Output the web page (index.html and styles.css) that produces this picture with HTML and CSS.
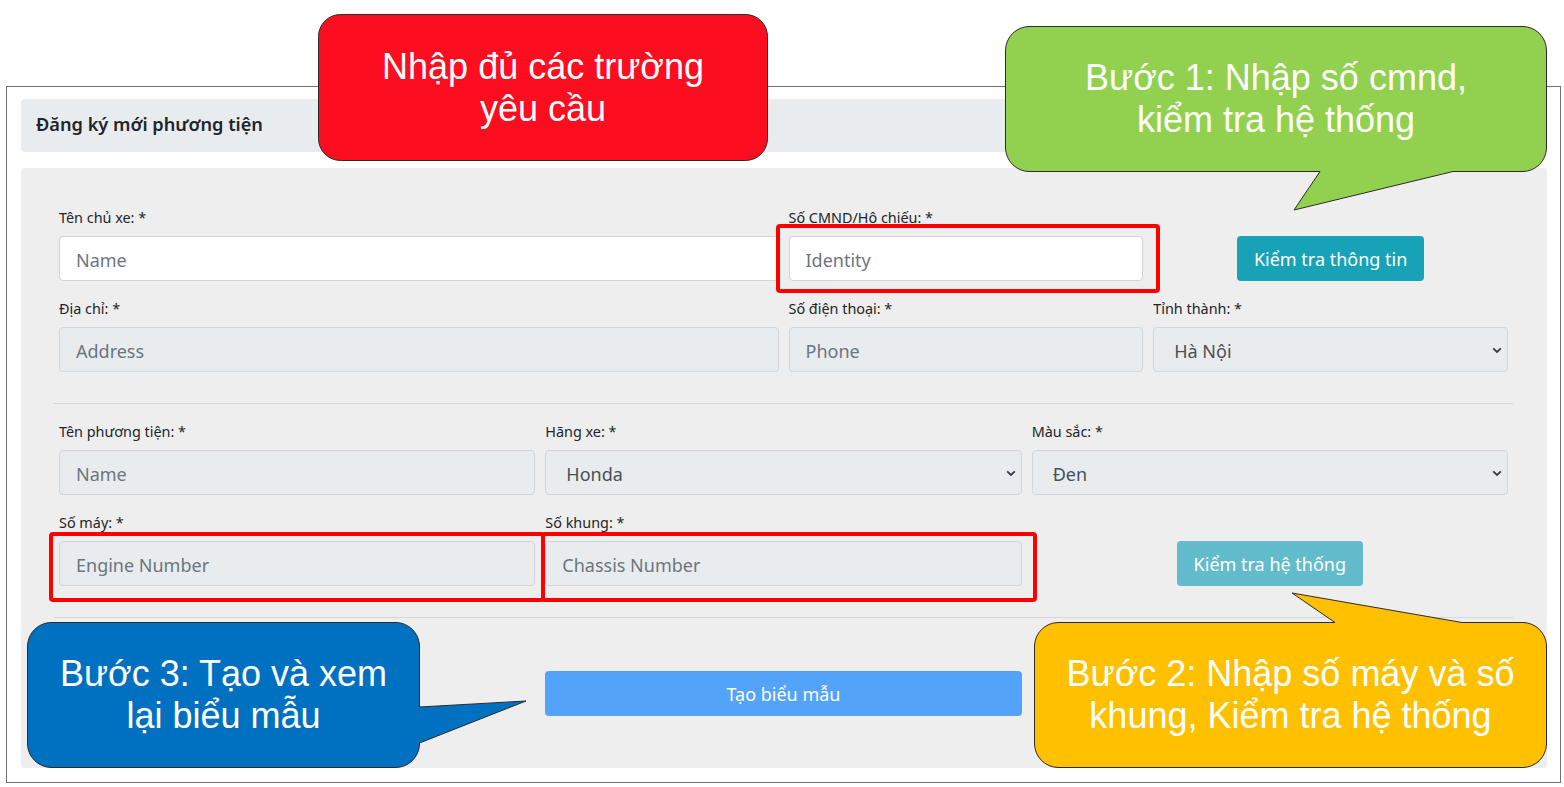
FILE: index.html
```html
<!DOCTYPE html>
<html lang="vi">
<head>
<meta charset="utf-8">
<title>Đăng ký mới phương tiện</title>
<link rel="stylesheet" href="styles.css">
</head>
<body>
<div class="page">
  <div class="frame">
    <div class="header">Đăng ký mới phương tiện</div>
    <div class="card">
      <div class="row">
        <div class="field span6"><label>Tên chủ xe: *</label><input class="ctl" placeholder="Name"></div>
        <div class="field span3"><label>Số CMND/Hộ chiếu: *</label><input class="ctl" placeholder="Identity"></div>
        <div class="btn-cell span3"><button class="btn info">Kiểm tra thông tin</button></div>
      </div>
      <div class="row">
        <div class="field span6"><label>Địa chỉ: *</label><input class="ctl dis" placeholder="Address" readonly></div>
        <div class="field span3"><label>Số điện thoại: *</label><input class="ctl dis" placeholder="Phone" readonly></div>
        <div class="field span3"><label>Tỉnh thành: *</label>
          <div class="sel"><select class="ctl dis"><option>Hà Nội</option></select><svg width="10" height="7" viewBox="0 0 10 7"><polyline points="1.2,1.3 5,5 8.8,1.3" fill="none" stroke="#343a40" stroke-width="1.8"/></svg></div>
        </div>
      </div>
      <hr class="sep">
      <div class="row">
        <div class="field span4"><label>Tên phương tiện: *</label><input class="ctl dis" placeholder="Name" readonly></div>
        <div class="field span4"><label>Hãng xe: *</label>
          <div class="sel"><select class="ctl dis"><option>Honda</option></select><svg width="10" height="7" viewBox="0 0 10 7"><polyline points="1.2,1.3 5,5 8.8,1.3" fill="none" stroke="#343a40" stroke-width="1.8"/></svg></div>
        </div>
        <div class="field span4"><label>Màu sắc: *</label>
          <div class="sel"><select class="ctl dis"><option>Đen</option></select><svg width="10" height="7" viewBox="0 0 10 7"><polyline points="1.2,1.3 5,5 8.8,1.3" fill="none" stroke="#343a40" stroke-width="1.8"/></svg></div>
        </div>
      </div>
      <div class="row">
        <div class="field span4"><label>Số máy: *</label><input class="ctl dis" placeholder="Engine Number" readonly></div>
        <div class="field span4"><label>Số khung: *</label><input class="ctl dis" placeholder="Chassis Number" readonly></div>
        <div class="btn-cell span4"><button class="btn info-dis">Kiểm tra hệ thống</button></div>
      </div>
      <hr class="sep">
      <div class="row submit-row">
        <div class="submit-cell"><button class="btn primary-dis">Tạo biểu mẫu</button></div>
      </div>
    </div>
  </div>

  <svg class="overlay" width="1564" height="787" viewBox="0 0 1564 787">
    <rect x="778" y="226" width="380" height="65" rx="2" fill="none" stroke="#ff0000" stroke-width="4"/>
    <rect x="51" y="534" width="492" height="66" rx="2" fill="none" stroke="#ff0000" stroke-width="4"/>
    <rect x="543" y="534" width="492" height="66" rx="2" fill="none" stroke="#ff0000" stroke-width="4"/>
    <rect x="318.5" y="14.5" width="449" height="146" rx="22" fill="#fc0d1f" stroke="#2b2b2b" stroke-width="1"/>
    <path d="M1029 26.5 H1523 A24 24 0 0 1 1546.5 50 V148 A24 24 0 0 1 1523 171.5 H1453 L1294 210 L1320 171.5 H1029 A24 24 0 0 1 1005.5 148 V50 A24 24 0 0 1 1029 26.5 Z" fill="#92d050" stroke="#2b2b2b" stroke-width="1"/>
    <path d="M1058 622.5 H1335 L1292 593 L1462 622.5 H1523 A24 24 0 0 1 1546.5 646 V744 A24 24 0 0 1 1523 767.5 H1058 A24 24 0 0 1 1034.5 744 V646 A24 24 0 0 1 1058 622.5 Z" fill="#ffc000" stroke="#2b2b2b" stroke-width="1"/>
    <path d="M51 622.5 H396 A24 24 0 0 1 419.5 646 V707 L526 701 L419.5 743 V744 A24 24 0 0 1 396 767.5 H51 A24 24 0 0 1 27.5 744 V646 A24 24 0 0 1 51 622.5 Z" fill="#0070c0" stroke="#2b2b2b" stroke-width="1"/>
  </svg>
  <div class="note note-red">Nhập đủ các trường<br>yêu cầu</div>
  <div class="note note-green">Bước 1: Nhập số cmnd,<br>kiểm tra hệ thống</div>
  <div class="note note-yellow">Bước 2: Nhập số máy và số<br>khung, Kiểm tra hệ thống</div>
  <div class="note note-blue">Bước 3: Tạo và xem<br>lại biểu mẫu</div>
</div>
</body>
</html>
```

FILE: styles.css
```css
html, body {
  margin: 0;
  background: #ffffff;
}

body {
  font-family: "Noto Sans", "Open Sans", sans-serif;
  color: #212529;
}

.page {
  position: relative;
  width: 1564px;
  height: 787px;
  overflow: hidden;
  padding-top: 86px;
  box-sizing: border-box;
}

.frame {
  margin-left: 6px;
  width: 1555px;
  height: 697px;
  box-sizing: border-box;
  border: 1px solid #707070;
  padding: 12px 13px 0 14px;
}

.header {
  height: 53px;
  background: #e9ecef;
  border-radius: 4px;
  display: flex;
  align-items: center;
  padding-left: 15px;
  padding-bottom: 3px;
  box-sizing: border-box;
  font-size: 18.2px;
  font-weight: 600;
  color: #212529;
}

.card {
  margin-top: 16px;
  height: 600px;
  background: #eeeeee;
  border-radius: 4px;
  padding: 39px 39px 0 38px;
  box-sizing: border-box;
}

.row {
  display: grid;
  grid-template-columns: repeat(12, 1fr);
  column-gap: 10px;
  margin-bottom: 17px;
}

.span6 { grid-column: span 6; }
.span4 { grid-column: span 4; }
.span3 { grid-column: span 3; }

.field label {
  display: block;
  font-size: 14.4px;
  line-height: 21px;
  margin-bottom: 8px;
  color: #212529;
}

.ctl {
  display: block;
  width: 100%;
  height: 45px;
  box-sizing: border-box;
  border: 1px solid #ced4da;
  border-radius: 4px;
  padding: 2px 16px 0;
  font-family: inherit;
  font-size: 18px;
  background: #ffffff;
  color: #495057;
  outline: none;
}

.ctl::placeholder {
  color: #6c757d;
  opacity: 1;
}

.ctl.dis {
  background: #e9ecef;
  border-color: #d2d6da;
}

select.ctl {
  appearance: none;
  -webkit-appearance: none;
  padding-left: 20px;
}

.sel {
  position: relative;
}

.sel svg {
  position: absolute;
  right: 6px;
  top: 20px;
  pointer-events: none;
}

.btn-cell {
  display: flex;
  align-items: flex-end;
  justify-content: center;
}

.btn {
  height: 45px;
  padding: 0 17px;
  border: 0;
  border-radius: 4px;
  color: #ffffff;
  font-family: inherit;
  font-size: 18px;
}

.info { background: #17a2b8; }
.info-dis { background: #62bccb; }

.primary-dis {
  background: #53a3f9;
  width: 100%;
}

.submit-cell {
  grid-column: 5 / span 4;
}

.submit-row {
  padding-top: 36px;
}

hr.sep {
  border: 0;
  border-top: 1px solid #d6d6d6;
  margin: 31px -5px 17px;
  height: 0;
}

.overlay {
  position: absolute;
  left: 0;
  top: 0;
  pointer-events: none;
}

.note {
  position: absolute;
  display: flex;
  align-items: center;
  justify-content: center;
  text-align: center;
  color: #ffffff;
  font-family: "Liberation Sans", Arial, sans-serif;
  font-size: 36px;
  line-height: 42px;
}

.note-red { left: 318px; top: 14px; width: 450px; height: 147px; }
.note-green { left: 1005px; top: 26px; width: 542px; height: 146px; }
.note-yellow { left: 1034px; top: 622px; width: 513px; height: 146px; }
.note-blue { left: 27px; top: 622px; width: 393px; height: 146px; }
```
